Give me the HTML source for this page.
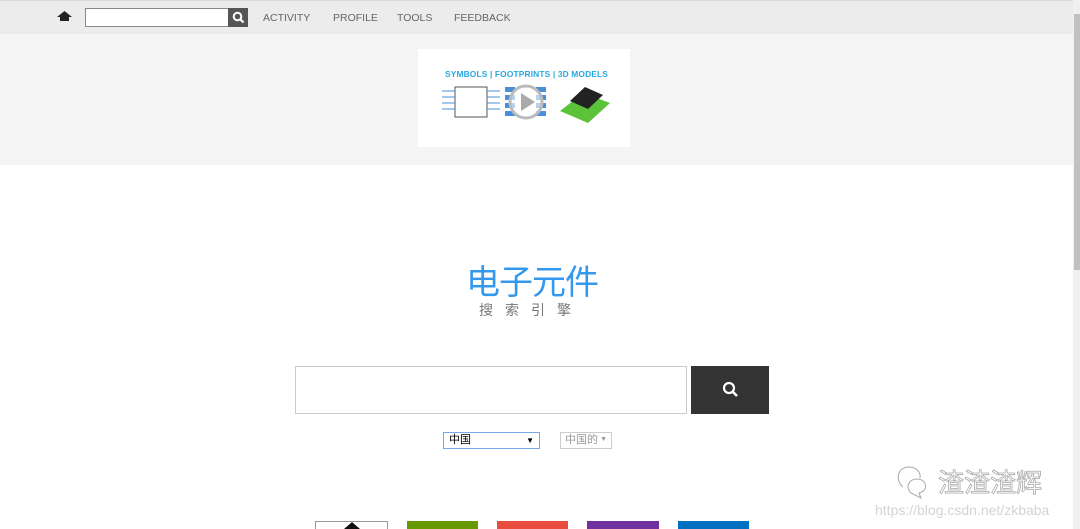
<!DOCTYPE html>
<html><head><meta charset="utf-8"><style>
*{margin:0;padding:0;box-sizing:border-box}
body{width:1080px;height:529px;overflow:hidden;background:#fff;font-family:"Liberation Sans","Noto Sans CJK SC",sans-serif;position:relative}
.nav{position:absolute;left:0;top:0;width:1073px;height:34px;background:#ececec;border-top:1px solid #d8d8d8}
.hero{position:absolute;left:0;top:34px;width:1073px;height:131px;background:#f5f5f5}
.a{position:absolute}
.nav span{position:absolute;top:11px;font-size:10.5px;color:#666}
</style></head><body>
<div class="nav">
 <svg class="a" style="left:56px;top:9px" width="17" height="12"><path d="M8.5 1 L16 7 H13 V11 H4 V7 H1 Z" fill="#222"/></svg>
 <div class="a" style="left:85px;top:7px;width:144px;height:19px;background:#fff;border:1px solid #888"></div>
 <div class="a" style="left:228px;top:7px;width:20px;height:19px;background:#555"></div>
 <svg class="a" style="left:232px;top:10px" width="13" height="13"><circle cx="5.5" cy="5.5" r="3.8" stroke="#fff" stroke-width="2" fill="none"/><path d="M8.3 8.3 L11.5 11.5" stroke="#fff" stroke-width="2.2"/></svg>
 <span style="left:263px">ACTIVITY</span>
 <span style="left:333px">PROFILE</span>
 <span style="left:397px">TOOLS</span>
 <span style="left:454px">FEEDBACK</span>
</div>
<div class="hero"></div>
<div class="a" style="left:418px;top:49px;width:212px;height:98px;background:#fff">
 <div class="a" style="left:27px;top:20px;font-size:8.4px;font-weight:bold;color:#29a8e0;white-space:nowrap;letter-spacing:0.15px">SYMBOLS | FOOTPRINTS | 3D MODELS</div>
 <svg class="a" style="left:20px;top:32px" width="180" height="50">
  <rect x="17" y="6" width="32" height="30" fill="none" stroke="#555" stroke-width="1"/>
  <g stroke="#4a8fd8"><path d="M4 10H17M4 16H17M4 22H17M4 28H17M49 10H62M49 16H62M49 22H62M49 28H62"/></g>
  <g fill="#4a8fd8"><rect x="67" y="6" width="10" height="5"/><rect x="67" y="14" width="10" height="5"/><rect x="67" y="22" width="10" height="5"/><rect x="67" y="30" width="10" height="5"/><rect x="98" y="6" width="10" height="5"/><rect x="98" y="14" width="10" height="5"/><rect x="98" y="22" width="10" height="5"/><rect x="98" y="30" width="10" height="5"/></g>
  <circle cx="88" cy="21" r="16" fill="rgba(255,255,255,.6)" stroke="#bbb" stroke-width="3"/>
  <path d="M83 12 L97 21 L83 30Z" fill="#aaa"/>
  <path d="M122 30 L150 42 L172 22 L145 12Z" fill="#5cc23a"/>
  <path d="M132 20 L150 28 L165 14 L147 6Z" fill="#222"/>
 </svg>
</div>
<div class="a" style="left:466px;top:259px;font-size:34px;color:#3399ee;font-family:'Noto Sans CJK SC',sans-serif;line-height:42px;letter-spacing:-1px">电子元件</div>
<div class="a" style="left:479px;top:301px;font-size:14px;color:#777;letter-spacing:12px;line-height:18px;font-family:'Noto Sans CJK SC',sans-serif">搜索引擎</div>
<div class="a" style="left:295px;top:366px;width:392px;height:48px;border:1px solid #ccc;background:#fff"></div>
<div class="a" style="left:691px;top:366px;width:78px;height:48px;background:#333"></div>
<svg class="a" style="left:722px;top:381px" width="17" height="17"><circle cx="7" cy="7" r="5" stroke="#fff" stroke-width="2.2" fill="none"/><path d="M10.5 10.5 L15 15" stroke="#fff" stroke-width="2.6"/></svg>
<div class="a" style="left:443px;top:432px;width:97px;height:17px;border:1px solid #7aa6e8;font-size:11px;line-height:15px;padding-left:5px;color:#000">中国<span style="position:absolute;right:5px;font-size:8px">▼</span></div>
<div class="a" style="left:560px;top:432px;width:52px;height:17px;border:1px solid #ccc;font-size:11px;line-height:15px;padding-left:4px;color:#999">中国的<span style="position:absolute;right:4px;font-size:7px;top:-1px">▼</span></div>
<svg class="a" style="left:895px;top:463px" width="36" height="36"><path d="M8 24 C0 18 2 4 14 4 C22 4 26 10 25 15" stroke="#aaa" fill="none"/><path d="M16 30 C10 24 14 16 22 16 C32 16 34 28 24 30 L26 35 Z" stroke="#aaa" fill="#fff"/></svg>
<div class="a" style="left:938px;top:466px;font-size:26px;color:#fff;-webkit-text-stroke:0.8px #aaa;font-family:'Noto Sans CJK SC',sans-serif;line-height:32px">渣渣渣辉</div>
<div class="a" style="left:875px;top:502px;font-size:14px;color:#d4d4d4">https://blog.csdn.net/zkbaba</div>
<div class="a" style="left:315px;top:521px;width:73px;height:8px;border:1px solid #999;border-bottom:none"></div>
<svg class="a" style="left:341px;top:521px" width="22" height="8"><path d="M11 1 L19 8 H3Z" fill="#111"/></svg>
<div class="a" style="left:407px;top:521px;width:71px;height:8px;background:#669900"></div>
<div class="a" style="left:497px;top:521px;width:71px;height:8px;background:#e84c3d"></div>
<div class="a" style="left:587px;top:521px;width:72px;height:8px;background:#7030a0"></div>
<div class="a" style="left:678px;top:521px;width:71px;height:8px;background:#0070c0"></div>
<div class="a" style="left:1073px;top:0;width:7px;height:529px;background:#f0f0f0"></div>
<div class="a" style="left:1074px;top:14px;width:6px;height:256px;background:#c1c1c1"></div>
</body></html>
